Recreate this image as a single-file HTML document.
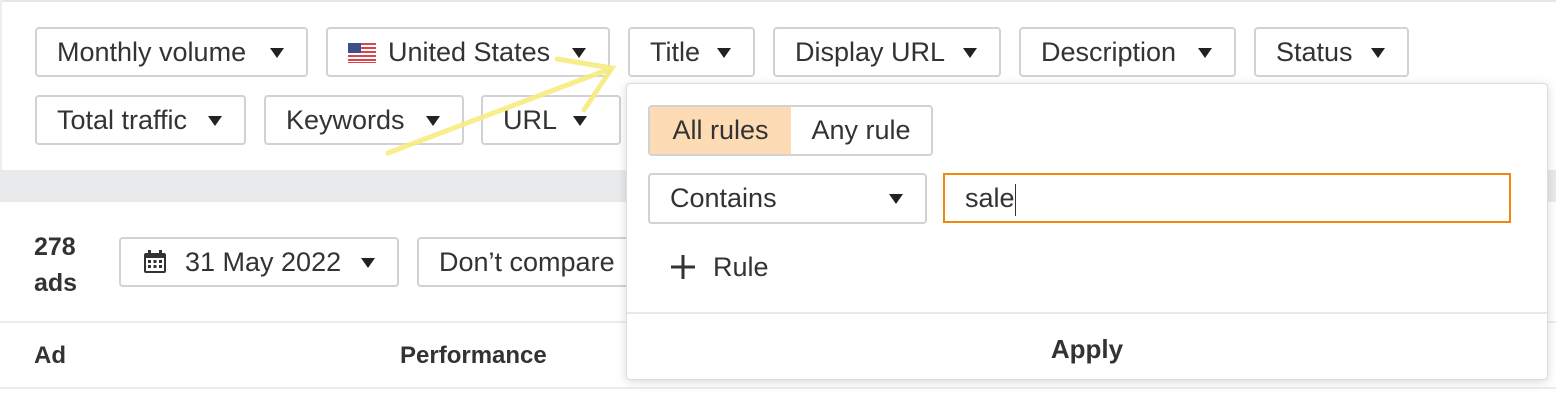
<!DOCTYPE html>
<html><head><style>
*{box-sizing:border-box;margin:0;padding:0}
body{width:1556px;height:406px;background:#fff;font-family:"Liberation Sans",Helvetica,Arial,sans-serif;color:#333;position:relative;overflow:hidden}
.b{position:absolute;height:50px;border:2px solid #d2d2d2;border-radius:4px;background:#fff;font-size:27px;line-height:46px;padding-left:20px;white-space:nowrap}
.c{position:absolute;right:22px;top:19px;width:0;height:0;border-left:7px solid transparent;border-right:7px solid transparent;border-top:10px solid #222}
.t{position:absolute;font-size:26px;white-space:nowrap}
</style></head><body>
<div style="position:absolute;left:0;top:0;width:1556px;height:2px;background:#e6e6e6"></div>
<div style="position:absolute;left:0;top:170px;width:1556px;height:32px;background:#e9eaec"></div>
<div style="position:absolute;left:0;top:0;width:2px;height:170px;background:#eee"></div>

<div class="b" style="left:35px;top:27px;width:273px">Monthly volume<span class="c"></span></div>
<div class="b" style="left:326px;top:27px;width:284px;padding-left:60px">
<svg style="position:absolute;left:20px;top:14px" width="28" height="20" viewBox="0 0 28 20"><rect width="28" height="20" fill="#fff"/><g fill="#d9454a"><rect y="0" width="28" height="2"/><rect y="4" width="28" height="2"/><rect y="8" width="28" height="2"/><rect y="12" width="28" height="2"/><rect y="16" width="28" height="2"/><rect y="19" width="28" height="1"/></g><rect width="13" height="10" fill="#3d4f8a"/></svg>United States<span class="c"></span></div>
<div class="b" style="left:628px;top:27px;width:127px">Title<span class="c"></span></div>
<div class="b" style="left:773px;top:27px;width:228px">Display URL<span class="c"></span></div>
<div class="b" style="left:1019px;top:27px;width:217px">Description<span class="c"></span></div>
<div class="b" style="left:1254px;top:27px;width:155px">Status<span class="c"></span></div>
<div class="b" style="left:35px;top:95px;width:211px">Total traffic<span class="c"></span></div>
<div class="b" style="left:264px;top:95px;width:200px">Keywords<span class="c"></span></div>
<div class="b" style="left:481px;top:95px;width:140px">URL<span class="c" style="right:32px"></span></div>

<div class="t" style="left:34px;top:229px;font-weight:bold;font-size:25px;line-height:36px;color:#333">278<br>ads</div>
<div class="b" style="left:119px;top:237px;width:280px;padding-left:64px">
<svg style="position:absolute;left:22px;top:11px" width="24" height="24" viewBox="0 0 24 24"><rect x="1" y="3" width="22" height="20" rx="2" fill="#333"/><rect x="3" y="8" width="18" height="13" fill="#fff"/><rect x="5" y="0" width="3" height="5" fill="#333"/><rect x="16" y="0" width="3" height="5" fill="#333"/><g fill="#333"><rect x="5" y="10" width="3" height="3"/><rect x="10.5" y="10" width="3" height="3"/><rect x="16" y="10" width="3" height="3"/><rect x="5" y="15" width="3" height="3"/><rect x="10.5" y="15" width="3" height="3"/><rect x="16" y="15" width="3" height="3"/></g></svg>31 May 2022<span class="c"></span></div>
<div class="b" style="left:417px;top:237px;width:240px">Don’t compare</div>
<div style="position:absolute;left:0;top:321px;width:1556px;height:2px;background:#ececec"></div>
<div class="t" style="left:34px;top:342px;font-weight:bold;font-size:24px">Ad</div>
<div class="t" style="left:400px;top:342px;font-weight:bold;font-size:24px">Performance</div>
<div style="position:absolute;left:0;top:387px;width:1556px;height:2px;background:#ececec"></div>

<svg style="position:absolute;left:0;top:0" width="1556" height="406"><g stroke="#f7ec7e" stroke-width="5" stroke-linecap="round" fill="none" opacity="0.9"><path d="M388 153 L612 68"/><path d="M557 59 L612 68 L584 110"/></g></svg>

<div style="position:absolute;left:626px;top:83px;width:922px;height:297px;background:#fff;border:1px solid #ddd;border-radius:4px;box-shadow:0 2px 10px rgba(0,0,0,0.15)">
<div style="position:absolute;left:21px;top:21px;width:285px;height:51px;border:2px solid #d2d2d2;border-radius:4px;overflow:hidden;font-size:27px;line-height:47px">
<div style="position:absolute;left:0;top:0;width:141px;height:47px;background:#fddcb5;text-align:center">All rules</div>
<div style="position:absolute;left:141px;top:0;width:140px;height:47px;text-align:center">Any rule</div></div>
<div class="b" style="left:21px;top:89px;width:279px;height:51px">Contains<span class="c" style="right:22px"></span></div>
<div style="position:absolute;left:316px;top:89px;width:568px;height:50px;border:2px solid #f0870f;font-size:27px;line-height:46px;padding-left:20px">sale<span style="display:inline-block;width:1px;height:32px;background:#333;vertical-align:middle"></span></div>
<svg style="position:absolute;left:44px;top:171px" width="24" height="24"><path d="M12 0V24M0 12H24" stroke="#333" stroke-width="3"/></svg>
<div style="position:absolute;left:86px;top:163px;font-size:27px;line-height:40px">Rule</div>
<div style="position:absolute;left:0;top:228px;width:100%;height:2px;background:#e8e8e8"></div>
<div style="position:absolute;left:0;top:248px;width:100%;text-align:center;font-size:26px;font-weight:bold;line-height:34px">Apply</div>
</div>
</body></html>
